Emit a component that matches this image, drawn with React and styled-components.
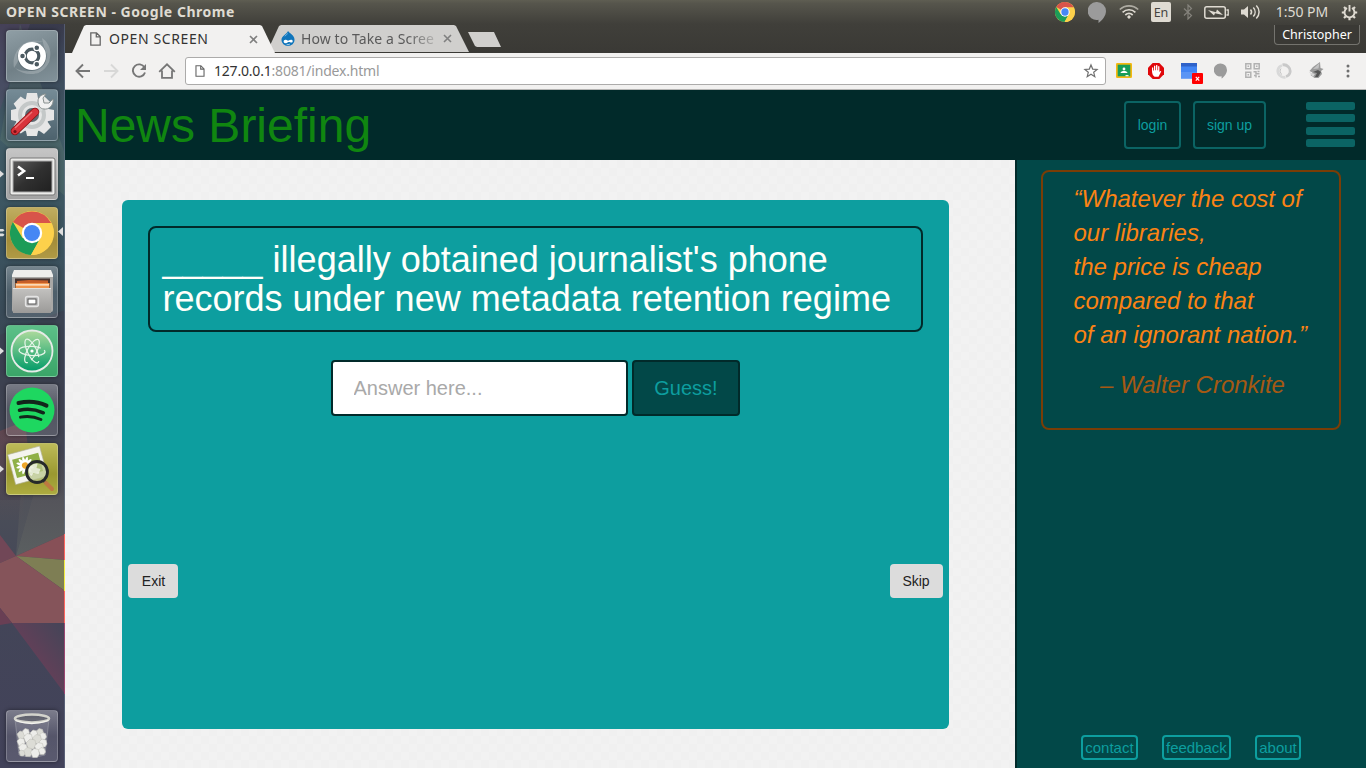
import React from 'react';
import styled, { createGlobalStyle } from 'styled-components';

const ui = `"Noto Sans", "Open Sans", sans-serif`;
const web = `"Liberation Sans", Arial, sans-serif`;

const GlobalStyle = createGlobalStyle`
  *, *::before, *::after { box-sizing: border-box; }
  body { margin: 0; overflow: hidden; background: #3c3b37; font-family: ${web}; }
  svg { display: block; flex: none; }
`;

const Desktop = styled.div`
  display: flex;
  flex-direction: column;
  width: 1366px;
  height: 768px;
`;

/* ---------- system panel ---------- */

const Panel = styled.header`
  display: flex;
  align-items: center;
  height: 24px;
  padding-left: 6px;
  background: linear-gradient(#5f5e52 0, #56554c 15%, #403f3a 100%);
  font-family: ${ui};
  color: #dfdbd2;
`;
const WindowTitle = styled.div`
  flex: 1;
  font-size: 14px;
  line-height: 24px;
  font-weight: 700;
  letter-spacing: 0.52px;
  white-space: nowrap;
`;
const Tray = styled.div`
  display: flex;
  align-items: center;
  height: 24px;
`;
const TraySlot = styled.div`
  display: flex;
  justify-content: center;
  width: ${(p) => p.$w}px;
`;
const Lang = styled.div`
  width: 20px;
  height: 20px;
  border-radius: 2px;
  background: #dfdbd2;
  color: #45443f;
  font-size: 12.5px;
  line-height: 21px;
  text-align: center;
`;
const Clock = styled.div`
  width: 64px;
  text-align: center;
  font-size: 14px;
  line-height: 24px;
  letter-spacing: 0;
  white-space: nowrap;
`;

/* ---------- launcher ---------- */

const Workspace = styled.div`
  display: flex;
  height: 744px;
`;
const Launcher = styled.nav`
  position: relative;
  display: flex;
  flex-direction: column;
  gap: 7px;
  width: 65px;
  height: 744px;
  padding: 6px 0 6px 6px;
  flex: none;
`;
const Wallpaper = styled.svg`
  position: absolute;
  left: 0;
  top: 0;
`;
const Tile = styled.div`
  position: relative;
  width: 52px;
  height: 52px;
  border-radius: 4px;
  background: ${(p) => p.$bg};
  border: 1px solid rgba(255, 255, 255, 0.22);
  box-shadow: 0 0 4px rgba(0, 0, 0, 0.45);
  margin-top: ${(p) => (p.$last ? 'auto' : 0)};
  > svg { margin: -1px; }
`;
const Running = styled.svg`
  position: absolute;
  left: ${(p) => p.$x}px;
  top: 20px;
`;

/* ---------- browser chrome ---------- */

const Browser = styled.div`
  display: flex;
  flex-direction: column;
  width: 1301px;
`;
const TabStrip = styled.div`
  display: flex;
  height: 29px;
  padding: 1px 6px 0 7px;
  background: linear-gradient(#403f3a, #3a3935);
  font-family: ${ui};
`;
const Tab = styled.div`
  display: flex;
  align-items: center;
  position: relative;
  z-index: ${(p) => (p.$active ? 2 : 1)};
  width: ${(p) => p.$w}px;
  height: ${(p) => (p.$active ? 28 : 27)}px;
  margin-right: ${(p) => (p.$active ? -8 : 0)}px;
  padding: 0 17px 0 ${(p) => (p.$active ? 18 : 14)}px;
  background: ${(p) => (p.$active ? '#f2f1f0' : '#d0cfcd')};
  clip-path: polygon(0 100%, 12px 1px, 14px 0, calc(100% - 15px) 0, calc(100% - 13px) 1px, 100% 100%);
`;
const TabLabel = styled.div`
  flex: 1;
  margin-left: ${(p) => (p.$fade ? 6 : 8)}px;
  font-size: 14px;
  line-height: 26px;
  letter-spacing: ${(p) => p.$ls || 0}px;
  color: ${(p) => (p.$fade ? '#5a5a5a' : '#333')};
  white-space: nowrap;
  ${(p) => p.$fade && 'mask-image: linear-gradient(90deg, #000 75%, transparent 100%);'}
`;
const NewTab = styled.div`
  width: 33px;
  height: 15px;
  margin: 7px 0 0 -1px;
  background: #d0cfcd;
  clip-path: polygon(0 0, 26px 0, 100% 100%, 9px 100%, 7px 14px);
`;
const Profile = styled.div`
  width: 86px;
  height: 20px;
  margin: 0 0 0 auto;
  border: 1px solid #74736e;
  border-top: 0;
  border-radius: 0 0 4px 4px;
  background: #3a3935;
  color: #fff;
  font-size: 12.5px;
  line-height: 20px;
  text-align: center;
`;
const Toolbar = styled.div`
  display: flex;
  align-items: center;
  height: 37px;
  padding: 0 2px 1px 4px;
  background: #f2f1f0;
  border-bottom: 1px solid #b5b4b3;
`;
const ToolSlot = styled.div`
  display: flex;
  justify-content: center;
  width: ${(p) => p.$w || 32}px;
`;
const AddressBar = styled.div`
  display: flex;
  align-items: center;
  width: 921px;
  height: 28px;
  margin: 0 2px 0 4px;
  padding: 0 6px 0 9px;
  background: #fff;
  border: 1px solid #acabaa;
  border-radius: 3px;
  font-family: ${ui};
`;
const Url = styled.div`
  flex: 1;
  margin-left: 9px;
  font-size: 14px;
  letter-spacing: -0.2px;
  line-height: 26px;
  color: #333;
  span { color: #999; }
`;

/* ---------- site ---------- */

const Masthead = styled.div`
  display: flex;
  align-items: center;
  height: 70px;
  padding: 0 11px 0 10px;
  background: #012a2a;
`;
const SiteName = styled.h1`
  flex: 1;
  margin: 0;
  padding-top: 1px;
  font-size: 48px;
  line-height: 53px;
  font-weight: 400;
  color: #108610;
`;
const AccountButton = styled.button`
  width: ${(p) => p.$w}px;
  height: 48px;
  margin-right: 12px;
  padding: 0;
  border: 2px solid #0b6464;
  border-radius: 4px;
  background: transparent;
  color: #0d9e9f;
  font: 14px ${web};
`;
const MenuBars = styled.div`
  display: flex;
  flex-direction: column;
  justify-content: space-between;
  width: 49px;
  height: 45px;
  margin: -1px 0 0 28px;
`;
const Bar = styled.div`
  height: 8px;
  border-radius: 2px;
  background: #0b6464;
`;
const Content = styled.div`
  display: flex;
  height: 608px;
`;
const Stage = styled.main`
  width: 950px;
  padding: 40px 66px 0 57px;
  background: repeating-conic-gradient(#f0f0f0 0 25%, #f2f2f2 0 50%) 0 0 / 16px 16px;
`;
const Card = styled.section`
  height: 529px;
  padding-top: 26px;
  border-radius: 6px;
  background: #0d9e9f;
`;
const Question = styled.h2`
  height: 106px;
  margin: 0 26px;
  padding: 12px 11px 12px 12.5px;
  border: 2px solid #012a2a;
  border-radius: 8px;
  color: #fffffa;
  font-size: 36px;
  font-weight: 400;
  line-height: 39px;
`;
const GuessForm = styled.div`
  display: flex;
  justify-content: center;
  gap: 4px;
  margin-top: 28px;
`;
const Answer = styled.input`
  width: 297px;
  height: 56px;
  padding: 0 20.5px;
  border: 2px solid #012a2a;
  border-radius: 4px;
  background: #fff;
  font: 20px ${web};
  &::placeholder { color: #a9a9a9; opacity: 1; }
`;
const GuessButton = styled.button`
  width: 108px;
  height: 56px;
  padding: 0;
  border: 2px solid #012a2a;
  border-radius: 4px;
  background: #024848;
  color: #0d9e9f;
  font: 20px ${web};
`;
const CardActions = styled.div`
  display: flex;
  justify-content: space-between;
  margin: 148px 6px 0;
`;
const PlainButton = styled.button`
  width: ${(p) => p.$w}px;
  height: 34px;
  padding: 0;
  padding-left: ${(p) => p.$nudge || 0}px;
  padding-right: ${(p) => (p.$nudge ? 0 : 1)}px;
  border: 0;
  border-radius: 4px;
  background: #dcdcdc;
  color: #222;
  font: 14px ${web};
`;
const Sidebar = styled.aside`
  display: flex;
  flex-direction: column;
  align-items: center;
  width: 351px;
  padding: 10px 1px 8px 0;
  border-left: 2px solid #012a2a;
  background: #024848;
`;
const Quote = styled.blockquote`
  width: 300px;
  height: 260px;
  margin: 0;
  padding: 10px 0 0 30.5px;
  border: 2px solid #7a3d06;
  border-radius: 8px;
  color: #fb8314;
  font-size: 24px;
  font-style: italic;
  line-height: 34px;
  white-space: nowrap;
`;
const Cite = styled.footer`
  display: flex;
  align-items: center;
  margin: 16px 0 0 26.5px;
  color: #a65913;
`;
const FooterLinks = styled.div`
  display: flex;
  gap: 24px;
  margin-top: auto;
`;
const FooterLink = styled.a`
  height: 25px;
  padding: 0 2.2px;
  border: 2px solid #0d9e9f;
  border-radius: 4px;
  color: #0d9e9f;
  font-size: 15px;
  line-height: 22px;
`;

/* ---------- icons ---------- */

const ChromeLogo = ({ size }) => (
  <svg width={size} height={size} viewBox="0 0 48 48">
    <circle cx="24" cy="24" r="22" fill="#fdd14b" />
    <path d="M24 24 4.9 13A22 22 0 0 1 43.1 14H24z" fill="#d8544a" />
    <path d="M4.9 13A22 22 0 0 0 23 46l9.5-17L24 24 14.5 29z" fill="#1c9c58" />
    <path d="M24 14h19.1A22 22 0 0 1 23 46l9.5-17z" fill="#fdd14b" />
    <circle cx="24" cy="24" r="10.2" fill="#fff" />
    <circle cx="24" cy="24" r="8" fill="#4687f4" />
  </svg>
);

const Bubble = ({ w, h }) => (
  <svg width={w} height={h} viewBox="0 0 18 21">
    <path d="M9 0a9 9 0 0 1 9 9c0 5-4 9.5-7.500 12v-3.200A9 9 0 1 1 9 0z" fill="#9b9b9b" />
  </svg>
);

const PageIcon = ({ w, h }) => (
  <svg width={w} height={h} viewBox="0 0 11 14" fill="none" stroke="#666" strokeWidth="1.300">
    <path d="M.8.8h5.700l3.700 3.700v8.700H.8zM6.300.8v4h4" />
  </svg>
);

const CloseIcon = () => (
  <svg width="9" height="9" viewBox="0 0 9 9" stroke="#808080" strokeWidth="1.600">
    <path d="M1 1l7 7M8 1L1 8" />
  </svg>
);

const Drupal = () => (
  <svg width="14" height="15" viewBox="0 0 15 16">
    <path d="M7.500 0C9 2.500 14.500 4 14.500 9.500a7 6.500 0 0 1-14 0C.5 5 6 4 7.500 0z" fill="#0f75bb" />
    <path d="M3 12c-.8-2 1-3.300 3-2.400 1 .4 1.500 1 2.200.6 1.500-1.200 3.800-1.500 4.300.2.400 1.800-1.300 2.400-2.700 1.700-1-.5-1.400-.6-2.300 0C5.500 13.300 3.700 13.600 3 12z" fill="#fff" />
    <path d="M6 14.200c1 .6 2.200.6 3.400-.2" stroke="#fff" fill="none" strokeWidth=".8" />
    <path d="M4 5.500C5.500 4.300 6.500 4 7 2.500" stroke="#71b6e4" fill="none" />
  </svg>
);

const Wifi = () => (
  <svg width="20" height="16" viewBox="0 0 20 16" fill="none" stroke="#dfdbd2" strokeWidth="1.700">
    <path d="M.8 5.500C6 .6 14 .6 19.200 5.500" opacity=".65" />
    <path d="M3.600 8.300c3.600-3.400 9.200-3.400 12.800 0M6.300 11c2.200-2 5.200-2 7.400 0" />
    <circle cx="10" cy="13" r="1.200" fill="#dfdbd2" strokeWidth="1" />
  </svg>
);

const Bluetooth = () => (
  <svg width="10" height="16" viewBox="0 0 10 16" fill="none" stroke="#85837c" strokeWidth="1.200">
    <path d="M1 4.500l7.500 7L5 15V1l3.500 3.500-7.500 7" />
  </svg>
);

const Battery = () => (
  <svg width="25" height="13" viewBox="0 0 25 13">
    <rect x=".8" y=".8" width="20.500" height="11.400" rx="2" fill="none" stroke="#dfdbd2" strokeWidth="1.500" />
    <path d="M22.500 4h1.700v5h-1.700" fill="none" stroke="#dfdbd2" strokeWidth="1.300" />
    <path d="M4 4l8 2.200 1-2.700L19 9l-8-1.800-1 2.300z" fill="#dfdbd2" />
  </svg>
);

const Sound = () => (
  <svg width="20" height="16" viewBox="0 0 20 16" fill="none" stroke="#dfdbd2" strokeWidth="1.500">
    <path d="M0 5.500h3L7 2v12l-4-3.500H0z" fill="#dfdbd2" stroke="none" />
    <path d="M9.500 5.500c1.300 1.500 1.300 3.500 0 5M12.300 3.500c2.400 2.600 2.400 6.400 0 9M15.300 1.500c3.700 3.800 3.700 9.200 0 13" />
  </svg>
);

const PowerGear = () => (
  <svg width="17" height="17" viewBox="0 0 17 17" fill="none" stroke="#dfdbd2">
    <path d="M6 4a5 5 0 1 0 5 0" strokeWidth="1.900" />
    <path d="M8.500 1v6.500" strokeWidth="1.900" />
    <path d="M8.500 13.200v3M.8 8.500h3M13.200 8.500h3M3 3l1.800 1.800M14 3l-1.800 1.800M3 14l1.800-1.800M14 14l-1.800-1.800" strokeWidth="2.200" />
  </svg>
);

const Arrow = ({ forward }) => (
  <svg width="16" height="16" viewBox="0 0 16 16" fill="none" stroke={forward ? '#d8d8d7' : '#767676'} strokeWidth="1.900">
    <path d={forward ? 'M1 8h13M8 1.500L14.500 8 8 14.500' : 'M15 8H2M8 1.500L1.500 8 8 14.500'} />
  </svg>
);

const Reload = () => (
  <svg width="16" height="16" viewBox="0 0 16 16" fill="none" stroke="#767676" strokeWidth="1.900">
    <path d="M13.500 4.500A6.200 6.200 0 1 0 14 9.500" />
    <path d="M15 1v6H9z" fill="#767676" stroke="none" />
  </svg>
);

const Home = () => (
  <svg width="18" height="16" viewBox="0 0 18 16" fill="none" stroke="#767676" strokeWidth="1.800">
    <path d="M1.200 8.800L9 1.300l7.800 7.500M4 7.500v7.300h10V7.500" />
  </svg>
);

const Star = () => (
  <svg width="16" height="16" viewBox="0 0 16 16" fill="none" stroke="#6f6f6f" strokeWidth="1.200">
    <path d="M8 1.900l1.700 4.200 4.400.3-3.400 2.900 1.100 4.400L8 11.300l-3.800 2.400 1.100-4.400L1.900 6.400l4.400-.3z" />
  </svg>
);

const Classroom = () => (
  <svg width="16" height="15" viewBox="0 0 16 15">
    <rect width="16" height="15" rx="1.200" fill="#f5b912" />
    <rect x="1.700" y="1.700" width="12.600" height="11.600" fill="#189d58" />
    <circle cx="8" cy="6" r="1.400" fill="#fff" />
    <path d="M4.500 10c.6-2.600 6.400-2.600 7 0z" fill="#fff" />
    <path d="M9.500 12h3v1.300h-3z" fill="#e8f5e9" />
  </svg>
);

const AdBlock = () => (
  <svg width="16" height="16" viewBox="0 0 16 16">
    <path d="M4.700 0h6.600L16 4.700v6.600L11.300 16H4.700L0 11.300V4.700z" fill="#e0080b" />
    <path d="M4 8V4.800q.7-.9 1.200 0V7.500h.8V3q.7-.8 1.300 0v4.300h.7V2.300q.8-.8 1.400 0v5h.7V3.500q.7-.8 1.300 0V9l1-1.100q1.100-.1.700.9l-2.600 4.900H6.600Q4 12 4 8z" fill="#fff" />
  </svg>
);

const WindowExt = () => (
  <svg width="24" height="22" viewBox="0 0 24 22">
    <path d="M2 1h16v15.500H2z" fill="#4285f4" />
    <path d="M2 1h16v3.500H2z" fill="#2f62c9" />
    <path d="M2 10h16v6.500H2z" fill="#5a95f5" />
    <rect x="13" y="11" width="11" height="11" rx="1" fill="#f00" />
    <path d="M16.800 14.800l3.400 3.800m0-3.800l-3.400 3.800" stroke="#fff" strokeWidth="1.200" />
  </svg>
);

const ExtShift = styled.div`
  padding-top: 5px;
  margin-left: 5px;
`;

const QrExt = () => (
  <svg width="15" height="15" viewBox="0 0 15 15" fill="none" stroke="#b2b2b2" strokeWidth="1.500">
    <path d="M.8.8h5v5h-5zM9.200.8h5v5h-5zM.8 9.200h5v5h-5z" />
    <path d="M2.500 3.300h1.600M10.900 3.300h1.600M2.500 11.700h1.600M8.500 8.800h2.500v2h3.500M9 12.500h2v2M13 13.500h2M12.500 8.500h2" />
  </svg>
);

const SwirlExt = () => (
  <svg width="16" height="16" viewBox="0 0 16 16" fill="none">
    <path d="M9.500 14.200A6.400 6.400 0 0 1 2 6.500 5.500 5.500 0 0 1 6 2.500" stroke="#d9d9d9" strokeWidth="2.800" />
    <path d="M6.500 1.900A6.400 6.400 0 0 1 14 9.500a5.500 5.500 0 0 1-4 4" stroke="#c9c9c9" strokeWidth="2.800" />
    <path d="M5 5.500a4 4 0 0 0 1 6" stroke="#c4c4c4" strokeWidth="1" />
  </svg>
);

const FoxExt = () => (
  <svg width="16" height="17" viewBox="0 0 16 17">
    <path d="M12 0L5 5 1.500 9l3 1.500-2 2.500 4 3h4l3.500-4-1-3 2.500-2-3-1z" fill="#9a9a9a" />
    <path d="M11.500 1L5 7l5.500-.5z" fill="#c2c2c2" />
    <path d="M5 10l5-2 3 2-3 5H7l2-4z" fill="#555" />
    <path d="M1 10l6 2-2 3z" fill="#d6d6d6" />
  </svg>
);

const MoreDots = () => (
  <svg width="4" height="14" viewBox="0 0 4 14" fill="#6f6f6f">
    <circle cx="2" cy="2" r="1.500" /><circle cx="2" cy="7" r="1.500" /><circle cx="2" cy="12" r="1.500" />
  </svg>
);

const Art = ({ children }) => <svg width="52" height="52" viewBox="0 0 52 52">{children}</svg>;

const UbuntuArt = () => (
  <Art>
    <g fill="#fff" opacity=".2">
      <path d="M8 38C5 22 18 6 38 12 24 9 14 18 14 28z" />
      <path d="M36 8c12 8 12 28-6 36 10-8 13-18 8-27z" />
      <path d="M44 30C38 46 20 48 9 38c10 5 20 4 27-2z" />
    </g>
    <circle cx="26" cy="26.500" r="14.600" fill="#33444c" opacity=".35" />
    <circle cx="26" cy="26" r="14" fill="#fff" />
    <circle cx="26" cy="26" r="6.800" fill="none" stroke="#4b5960" strokeWidth="3.200" />
    <path d="M26 26h-12M26 26l6-10.400M26 26l6 10.400" stroke="#fff" strokeWidth="1" opacity="0" />
    <g fill="#4b5960" stroke="#fff" strokeWidth="1.300">
      <circle cx="16.500" cy="26" r="2.900" /><circle cx="30.800" cy="17.800" r="2.900" /><circle cx="30.800" cy="34.200" r="2.900" />
    </g>
  </Art>
);

const SettingsArt = () => (
  <Art>
    <g fill="#e6e6e6">
      {[0, 45, 90, 135].map((a) => (
        <path key={a} d="M21 4h10l1.500 8v28L31 47H21l-1.500-7V12z" transform={`rotate(${a} 26 26)`} />
      ))}
      <circle cx="26" cy="26" r="17" />
    </g>
    <circle cx="26" cy="26" r="12" fill="none" stroke="#c4c8c8" strokeWidth="4" />
    <circle cx="26" cy="26" r="7" fill="#5d6b72" />
    <path d="M26 25L36 15l4 3-11 10z" fill="#d5d8d8" />
    <path d="M32 12c0-4 4-7 8-7l-3 4 1 5 5 0 4-4c1 6-4 11-9 10-4 0-6-4-6-8z" fill="#f1f1f1" stroke="#88908f" strokeWidth="1" />
    <path d="M29 23L9 42" stroke="#8b1114" strokeWidth="8.500" strokeLinecap="round" />
    <path d="M29 23L9 42" stroke="#d9333b" strokeWidth="6.800" strokeLinecap="round" />
    <path d="M26 23L9 39" stroke="#ef7777" strokeWidth="1.300" />
    <circle cx="9" cy="42.500" r="1.600" fill="#771015" />
  </Art>
);

const TerminalArt = () => (
  <Art>
    <defs>
      <linearGradient id="term" x1="0" y1="0" x2="1" y2="1">
        <stop offset="0" stopColor="#5b5b5b" /><stop offset=".5" stopColor="#303030" /><stop offset="1" stopColor="#202020" />
      </linearGradient>
    </defs>
    <rect x="4" y="10" width="45" height="37" rx="2" fill="#ececea" stroke="#777" />
    <rect x="7" y="13" width="39" height="31" fill="url(#term)" stroke="#aaa" />
    <path d="M12 18.500l6 4.500-6 4.500" fill="none" stroke="#fff" strokeWidth="2.600" />
    <path d="M20 30h8" stroke="#fff" strokeWidth="2" />
  </Art>
);

const FilesArt = () => (
  <Art>
    <defs>
      <linearGradient id="drawer" x1="0" y1="0" x2="0" y2="1">
        <stop offset="0" stopColor="#c3c2c0" /><stop offset="1" stopColor="#9b9a98" />
      </linearGradient>
    </defs>
    <path d="M8 4h37l2 5v3H6V9z" fill="#eeeeec" />
    <path d="M6 11h41v33q0 2-2 2H8q-2 0-2-2z" fill="#a9a8a6" />
    <path d="M9 12.500h35v11H9z" fill="#45332f" />
    <path d="M11 15l12-1 19 .5v8H11z" fill="#c65e28" />
    <path d="M9.500 17h34v5h-34z" fill="#f0964f" />
    <path d="M10 18.800h33" stroke="#fff0dc" strokeWidth="1.200" />
    <path d="M7 22h38v25H7z" fill="url(#drawer)" /><path d="M7 22.500h38" stroke="#e2e2e0" />
    <rect x="19.500" y="30.500" width="13" height="10" rx="2" fill="#bbb" stroke="#e4e4e4" strokeWidth="1.300" />
    <rect x="22" y="33" width="8" height="5" fill="#fff" stroke="#555" />
  </Art>
);

const AtomArt = () => (
  <Art>
    <defs>
      <linearGradient id="atom" x1="0" y1="0" x2="0" y2="1">
        <stop offset="0" stopColor="#aedb9d" /><stop offset="1" stopColor="#019b68" />
      </linearGradient>
    </defs>
    <circle cx="26" cy="26" r="20.500" fill="url(#atom)" stroke="#e6ebe7" strokeWidth="1.800" />
    <g fill="none" stroke="#e6f5e9" strokeWidth="1.200">
      {[4, 64, 118].map((a) => (
        <ellipse key={a} cx="26" cy="26" rx="13" ry="4.600" strokeDasharray="52 4" transform={`rotate(${a} 26 26)`} />
      ))}
    </g>
    <circle cx="26" cy="26" r="1.600" fill="#fff" />
  </Art>
);

const SpotifyArt = () => (
  <Art>
    <circle cx="26" cy="26" r="22.500" fill="#1ed760" />
    <g fill="none" stroke="#12261b" strokeLinecap="round">
      <path d="M12.500 19c9-2.200 20-1.200 28 2.600" strokeWidth="4" />
      <path d="M13.500 26.300c8-1.900 16.500-.8 23.800 2.500" strokeWidth="3.500" />
      <path d="M14.500 33.200c7-1.500 14-.6 20.500 2.300" strokeWidth="2.900" />
    </g>
  </Art>
);

const ViewerArt = () => (
  <Art>
    <g transform="rotate(-15 21 22)">
      <rect x="5" y="7" width="33" height="31" fill="#f4f4ee" stroke="#b1b399" strokeWidth=".6" />
      <rect x="8" y="13" width="27" height="19" fill="#8fb047" />
      {[0, 30, 60, 90, 120, 150].map((a) => (
        <ellipse key={a} cx="19" cy="22" rx="9" ry="1.800" fill="#fff" transform={`rotate(${a} 19 22)`} />
      ))}
      <circle cx="19" cy="22" r="3.200" fill="#eea62b" />
    </g>
    <path d="M37 37l3 3" stroke="#444" strokeWidth="3" />
    <path d="M40 40l6 6" stroke="#bd7941" strokeWidth="4" strokeLinecap="round" />
    <circle cx="31" cy="29" r="10.500" fill="#b9c78c" fillOpacity=".75" stroke="#26292a" strokeWidth="2.800" />
    <path d="M22.500 26c2-4 6-6 9-5l-1 4 4 1-2 5-5-1-2 3c-2-1-3-4-3-7z" fill="#fff" opacity=".65" />
  </Art>
);

const scraps = [
  [15, 25, 4], [20, 22, 3.500], [28, 24, 4], [34, 22, 3.500], [37, 26, 3.500], [22, 28, 4.500], [31, 29, 4.500],
  [15, 32, 4], [37, 33, 4], [25, 34, 5], [17, 38, 4.500], [33, 37, 4.500], [22, 42, 4.500], [29, 43, 4.500], [36, 41, 3.500], [16, 43, 3],
];

const TrashArt = () => (
  <Art>
    <path d="M9 9l4 36q13 4 26 0l4-36z" fill="#a7a8b4" fillOpacity=".22" stroke="#a4a5ae" strokeOpacity=".5" />
    {scraps.map(([x, y, r], i) => (
      <path
        key={i}
        d={`M${x - r} ${y - 1}l${r - 1}-${r - 1} ${r} 1 1 ${r}-${r / 2} ${r - 1}-${r} 0z`}
        fill={i % 3 === 0 ? '#dcdcd6' : '#ededea'}
        stroke="#c2c2bc"
        strokeWidth=".6"
        strokeLinejoin="round"
      />
    ))}
    <ellipse cx="26" cy="8.500" rx="17" ry="4" fill="#5b5c66" fillOpacity=".7" stroke="#d3d3cc" strokeWidth="2.600" />
    <path d="M9.500 10.500q16 6 33 0" fill="none" stroke="#f4f4ef" strokeWidth="1.300" />
  </Art>
);

const slate = 'linear-gradient(160deg, #8f9ea5, #718087 60%, #82929a)';
const glass = 'linear-gradient(rgba(255,255,255,.3), rgba(255,255,255,.1) 50%, rgba(255,255,255,.13))';

const apps = [
  { id: 'dash', bg: slate, art: <UbuntuArt /> },
  { id: 'settings', bg: 'linear-gradient(#758b96, #4d626d)', art: <SettingsArt /> },
  { id: 'terminal', bg: 'linear-gradient(#c5c5c5, #a3a3a3)', art: <TerminalArt />, running: 1 },
  { id: 'chrome', bg: 'linear-gradient(#c0ad60, #a48d39 65%, #b09a45)', art: <Art><g transform="translate(2 2)"><ChromeLogo size={48} /></g></Art>, running: 2, focused: true },
  { id: 'files', bg: glass, art: <FilesArt /> },
  { id: 'atom', bg: 'linear-gradient(#5cc088, #3aa568)', art: <AtomArt />, running: 1 },
  { id: 'spotify', bg: glass, art: <SpotifyArt /> },
  { id: 'viewer', bg: 'linear-gradient(#bdbb58, #9a9830 60%, #adab40)', art: <ViewerArt />, running: 1 },
];

const LauncherBackdrop = () => (
  <Wallpaper width="65" height="744" viewBox="0 24 65 744">
    <defs>
      <linearGradient id="base" x1="0" y1="0" x2="0" y2="1">
        <stop offset="0" stopColor="#393a4c" /><stop offset=".04" stopColor="#3d4659" />
        <stop offset=".15" stopColor="#405b66" /><stop offset=".3" stopColor="#3b535f" />
        <stop offset=".46" stopColor="#394452" /><stop offset=".62" stopColor="#4b4f58" />
        <stop offset=".8" stopColor="#434558" /><stop offset="1" stopColor="#42425a" />
      </linearGradient>
      <linearGradient id="wine" x1="1" y1="0" x2=".4" y2=".6">
        <stop offset="0" stopColor="#434558" /><stop offset="1" stopColor="#663f58" />
      </linearGradient>
      <linearGradient id="rust" x1="0" y1="0" x2="0" y2="1">
        <stop offset="0" stopColor="#70484f" stopOpacity=".75" /><stop offset="1" stopColor="#5a4d54" stopOpacity=".1" />
      </linearGradient>
      <linearGradient id="ash" x1="0" y1="0" x2="0" y2="1">
        <stop offset="0" stopColor="#514c53" stopOpacity="0" /><stop offset=".5" stopColor="#55555b" />
        <stop offset="1" stopColor="#5a5f60" />
      </linearGradient>
    </defs>
    <path d="M0 24h65v744H0z" fill="url(#base)" />
    <path d="M0 24h30L0 110z" fill="#5b4d6c" opacity=".35" />
    <path d="M20 24l45 130v42L0 140z" fill="#668573" opacity=".25" />
    <path d="M65 310v190H0V335z" fill="#3d3b4d" opacity=".45" />
    <path d="M0 431l25-10 3 28-6 71H0z" fill="url(#rust)" />
    <path d="M24 450h22L16 556z" fill="url(#ash)" opacity=".6" />
    <path d="M46 450h19v84l-49 22z" fill="url(#ash)" />
    <path d="M0 535l16 21-16 7z" fill="#714757" />
    <path d="M65 534v26l-49-4z" fill="#875057" />
    <path d="M16 556l49 4v31z" fill="#7e7e54" />
    <path d="M0 563l16-7 49 35v32H12L0 608z" fill="#85545a" />
    <path d="M0 608l12 15-12 2z" fill="#693f54" />
    <path d="M12 623h53v71z" fill="url(#wine)" />
    <path d="M64 24h1v744h-1z" fill="#75839a" opacity=".45" />
    <path d="M64 534h1v26h-1zM64 591h1v32h-1z" fill="#ff655e" />
    <path d="M64 560h1v31h-1z" fill="#f1eb40" />
    <path d="M64 623h1v71h-1z" fill="#9b4672" />
  </Wallpaper>
);

const RunningMark = ({ count }) => (
  <Running $x={-7} width="6" height="14" viewBox="0 0 6 14" fill="#dedede">
    {count === 2 ? <path d="M0 2h4l1.500 1.200L4 4.600H0zM0 6.500h4l1.500 1.200L4 9.200H0z" /> : <path d="M0 1.500L5 6l-5 4.500z" />}
  </Running>
);

export default function App() {
  return (
    <Desktop>
      <GlobalStyle />
      <Panel>
        <WindowTitle>OPEN SCREEN - Google Chrome</WindowTitle>
        <Tray>
          <TraySlot $w={32}><ChromeLogo size={22} /></TraySlot>
          <TraySlot $w={32}><Bubble w={18} h={21} /></TraySlot>
          <TraySlot $w={32}><Wifi /></TraySlot>
          <TraySlot $w={32}><Lang>En</Lang></TraySlot>
          <TraySlot $w={21}><Bluetooth /></TraySlot>
          <TraySlot $w={37}><Battery /></TraySlot>
          <TraySlot $w={32}><Sound /></TraySlot>
          <TraySlot $w={70}><Clock>1:50 PM</Clock></TraySlot>
          <TraySlot $w={25}><PowerGear /></TraySlot>
          <TraySlot $w={4} />
        </Tray>
      </Panel>
      <Workspace>
        <Launcher>
          <LauncherBackdrop />
          {apps.map((app) => (
            <Tile key={app.id} $bg={app.bg}>
              {app.art}
              {app.running && <RunningMark count={app.running} />}
              {app.focused && (
                <Running $x={52} width="5" height="10" viewBox="0 0 5 10" fill="#dedede"><path d="M5 0v9L0 4.500z" /></Running>
              )}
            </Tile>
          ))}
          <Tile $bg={glass} $last><TrashArt /></Tile>
        </Launcher>
        <Browser>
          <TabStrip>
            <Tab $active $w={203}>
              <PageIcon w={11} h={14} />
              <TabLabel $ls={0.6}>OPEN SCREEN</TabLabel>
              <CloseIcon />
            </Tab>
            <Tab $w={202}>
              <Drupal />
              <TabLabel $fade $ls={0.1}>How to Take a Scree</TabLabel>
              <CloseIcon />
            </Tab>
            <NewTab />
            <Profile>Christopher</Profile>
          </TabStrip>
          <Toolbar>
            <ToolSlot $w={28}><Arrow /></ToolSlot>
            <ToolSlot $w={28}><Arrow forward /></ToolSlot>
            <ToolSlot $w={28}><Reload /></ToolSlot>
            <ToolSlot $w={28}><Home /></ToolSlot>
            <AddressBar>
              <PageIcon w={10} h={12} />
              <Url>127.0.0.1<span>:8081/index.html</span></Url>
              <Star />
            </AddressBar>
            <ToolSlot><Classroom /></ToolSlot>
            <ToolSlot><AdBlock /></ToolSlot>
            <ToolSlot><ExtShift><WindowExt /></ExtShift></ToolSlot>
            <ToolSlot><Bubble w={13} h={16} /></ToolSlot>
            <ToolSlot><QrExt /></ToolSlot>
            <ToolSlot><SwirlExt /></ToolSlot>
            <ToolSlot><FoxExt /></ToolSlot>
            <ToolSlot><MoreDots /></ToolSlot>
          </Toolbar>
          <Masthead>
            <SiteName>News Briefing</SiteName>
            <AccountButton $w={57}>login</AccountButton>
            <AccountButton $w={73}>sign up</AccountButton>
            <MenuBars><Bar /><Bar /><Bar /><Bar /></MenuBars>
          </Masthead>
          <Content>
            <Stage>
              <Card>
                <Question>_____ illegally obtained journalist's phone records under new metadata retention regime</Question>
                <GuessForm>
                  <Answer placeholder="Answer here..." />
                  <GuessButton>Guess!</GuessButton>
                </GuessForm>
                <CardActions>
                  <PlainButton $w={50} $nudge={1}>Exit</PlainButton>
                  <PlainButton $w={53}>Skip</PlainButton>
                </CardActions>
              </Card>
            </Stage>
            <Sidebar>
              <Quote>
                “Whatever the cost of<br />our libraries,<br />the price is cheap<br />compared to that<br />of an ignorant nation.”
                <Cite>– Walter Cronkite</Cite>
              </Quote>
              <FooterLinks>
                <FooterLink>contact</FooterLink>
                <FooterLink>feedback</FooterLink>
                <FooterLink>about</FooterLink>
              </FooterLinks>
            </Sidebar>
          </Content>
        </Browser>
      </Workspace>
    </Desktop>
  );
}
